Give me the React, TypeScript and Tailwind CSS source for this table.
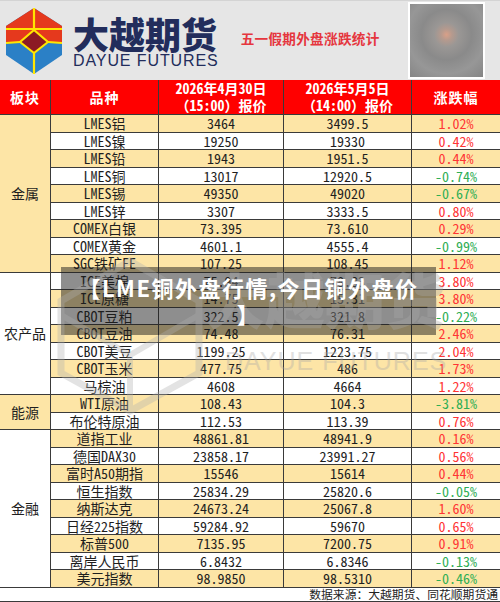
import React from "react";

type Row = { name: string; a: string; b: string; p: string };
type Group = { sector: string; rows: Row[] };

const groups: Group[] = [
  {
    sector: "金属",
    rows: [
      { name: "LMES铝", a: "3464", b: "3499.5", p: "1.02%" },
      { name: "LMES镍", a: "19250", b: "19330", p: "0.42%" },
      { name: "LMES铅", a: "1943", b: "1951.5", p: "0.44%" },
      { name: "LMES铜", a: "13017", b: "12920.5", p: "-0.74%" },
      { name: "LMES锡", a: "49350", b: "49020", p: "-0.67%" },
      { name: "LMES锌", a: "3307", b: "3333.5", p: "0.80%" },
      { name: "COMEX白银", a: "73.395", b: "73.610", p: "0.29%" },
      { name: "COMEX黄金", a: "4601.1", b: "4555.4", p: "-0.99%" },
      { name: "SGC铁矿FE", a: "107.25", b: "108.45", p: "1.12%" },
    ],
  },
  {
    sector: "农产品",
    rows: [
      { name: "ICE美棉", a: "75.94", b: "78.83", p: "3.80%" },
      { name: "ICE原糖", a: "14.75", b: "15.31", p: "3.80%" },
      { name: "CBOT豆粕", a: "322.5", b: "321.8", p: "-0.22%" },
      { name: "CBOT豆油", a: "74.48", b: "76.31", p: "2.46%" },
      { name: "CBOT美豆", a: "1199.25", b: "1223.75", p: "2.04%" },
      { name: "CBOT玉米", a: "477.75", b: "486", p: "1.73%" },
      { name: "马棕油", a: "4608", b: "4664", p: "1.22%" },
    ],
  },
  {
    sector: "能源",
    rows: [
      { name: "WTI原油", a: "108.43", b: "104.3", p: "-3.81%" },
      { name: "布伦特原油", a: "112.53", b: "113.39", p: "0.76%" },
    ],
  },
  {
    sector: "金融",
    rows: [
      { name: "道指工业", a: "48861.81", b: "48941.9", p: "0.16%" },
      { name: "德国DAX30", a: "23858.17", b: "23991.27", p: "0.56%" },
      { name: "富时A50期指", a: "15546", b: "15614", p: "0.44%" },
      { name: "恒生指数", a: "25834.29", b: "25820.6", p: "-0.05%" },
      { name: "纳斯达克", a: "24673.24", b: "25067.8", p: "1.60%" },
      { name: "日经225指数", a: "59284.92", b: "59670", p: "0.65%" },
      { name: "标普500", a: "7135.95", b: "7200.75", p: "0.91%" },
      { name: "离岸人民币", a: "6.8432", b: "6.8346", p: "-0.13%" },
      { name: "美元指数", a: "98.9850", b: "98.5310", p: "-0.46%" },
    ],
  },
];

function Logo() {
  return (
    <svg width="56" height="66" viewBox="0 0 56 66">
      <polygon points="28,0 56,18 56,47 28,66 0,47 0,18" fill="#2b80c6" />
      <polygon points="0,18 28,0 56,18 56,35 42,34 28,45 14,34 0,35" fill="#e5391d" />
      <polygon points="28,22 42,34 28,45 14,34" fill="#8c1b24" />
      <g stroke="#ffe600" strokeWidth="2.2" fill="none" strokeLinejoin="round">
        <line x1="0" y1="21" x2="56" y2="21" />
        <line x1="28" y1="0" x2="28" y2="22" />
        <polygon points="28,22 42,34 28,45 14,34" />
        <line x1="0" y1="35" x2="14" y2="34" />
        <line x1="42" y1="34" x2="56" y2="35" />
        <line x1="28" y1="45" x2="28" y2="66" />
      </g>
    </svg>
  );
}

const YELLOW = "bg-[#fde5a6]";

export default function App() {
  let idx = 0;
  return (
    <div className="relative w-[500px] h-[602px] overflow-hidden bg-white font-['Noto_Sans_Mono_CJK_SC','Noto_Sans_CJK_SC',sans-serif] text-[#1e1e1e]">
      {/* Top banner */}
      <div className="flex items-center h-[80px] bg-[#e6e6e6] border-t border-[#d4d4d4]">
        <div className="ml-[6px] mt-[1px]">
          <Logo />
        </div>
        <div className="flex flex-col ml-[11px] mt-[2px]">
          <div className="font-['Noto_Sans_CJK_SC',sans-serif] font-black text-[36px] leading-[40px] text-[#222d5c]">
            大越期货
          </div>
          <div className="font-['Liberation_Sans',sans-serif] text-[16px] leading-[18px] tracking-[0.9px] text-[#222d5c] mt-[-1px]">
            DAYUE FUTURES
          </div>
        </div>
        <div className="ml-[22px] mt-[-5px] font-['Noto_Sans_CJK_SC',sans-serif] font-bold text-[13.6px] tracking-[0.3px] text-[#e5363e]">
          五一假期外盘涨跌统计
        </div>
        <div className="ml-auto mr-[15px] w-[77px] h-[77px] bg-white p-[2px]">
          <div className="w-full h-full bg-[radial-gradient(circle_at_50%_42%,#d9a088_0%,#b59a8e_10%,#9a9795_22%,#8a8a8a_45%,#979797_70%,#858585_100%)]" />
        </div>
      </div>

      {/* Table header */}
      <div className="flex h-[35px] bg-[#ff0000] text-white font-bold text-[14px] leading-[17px] border-b border-[#3a3a3a] text-center">
        <div className="w-[51px] border-r border-[#3a3a3a] flex items-center justify-center tracking-[1px]">板块</div>
        <div className="w-[108px] border-r border-[#3a3a3a] flex items-center justify-center tracking-[1px]">品种</div>
        <div className="w-[125px] border-r border-[#3a3a3a] flex flex-col items-center justify-center">
          <span>2026年4月30日</span>
          <span>（15:00）报价</span>
        </div>
        <div className="w-[128px] border-r border-[#3a3a3a] flex flex-col items-center justify-center">
          <span>2026年5月5日</span>
          <span>（14:00）报价</span>
        </div>
        <div className="flex-1 flex items-center justify-center tracking-[1px]">涨跌幅</div>
      </div>

      {/* Body */}
      <div className="flex flex-col text-[14px] leading-[16px]">
        {groups.map((g, gi) => (
          <div key={g.sector} className="flex">
            <div
              className={
                "w-[51px] shrink-0 border-r border-b border-[#3a3a3a] flex items-center justify-center " +
                (gi % 2 === 0 ? YELLOW : "bg-white")
              }
            >
              {g.sector}
            </div>
            <div className="flex flex-col flex-1">
              {g.rows.map((r) => {
                const y = idx % 2 === 0;
                idx++;
                const neg = r.p.startsWith("-");
                return (
                  <div
                    key={r.name}
                    className={"flex h-[17.5px] border-b border-[#3a3a3a] " + (y ? YELLOW : "bg-white")}
                  >
                    <div className="w-[108px] border-r border-[#3a3a3a] flex items-center justify-center">{r.name}</div>
                    <div className="w-[125px] border-r border-[#3a3a3a] flex items-center justify-center">{r.a}</div>
                    <div className="w-[128px] border-r border-[#3a3a3a] flex items-center justify-center">{r.b}</div>
                    <div
                      className={
                        "flex-1 flex items-center justify-center " + (neg ? "text-[#2fae55]" : "text-[#ff3535]")
                      }
                    >
                      {r.p}
                    </div>
                  </div>
                );
              })}
            </div>
          </div>
        ))}
      </div>

      {/* Footer */}
      <div className="flex items-center justify-end h-[14.5px] border-b border-[#3a3a3a] pr-[2px] text-[11.8px] leading-[12px] text-[#222]">
        数据来源：大越期货、同花顺期货通
      </div>

      {/* Title overlay box */}
      <div className="absolute left-[61px] top-[267px] w-[375px] h-[68px] bg-[rgba(30,30,30,0.5)]" />

      {/* Watermark */}
      <div className="absolute left-[55px] top-[255px] w-[400px] h-[160px] opacity-35 pointer-events-none">
        <svg className="absolute left-0 top-0" width="150" height="160" viewBox="0 0 150 160">
          <polygon points="75,6 144,46 144,118 75,156 6,118 6,46" fill="none" stroke="#b0b0b0" strokeWidth="7" />
          <polyline points="6,60 75,100 144,60" fill="none" stroke="#b0b0b0" strokeWidth="6" />
          <line x1="75" y1="100" x2="75" y2="156" stroke="#b0b0b0" strokeWidth="6" />
        </svg>
        <div className="absolute left-[150px] top-[8px] font-['Noto_Sans_CJK_SC',sans-serif] font-black text-[60px] leading-[70px] text-[#a8a8a8] whitespace-nowrap">
          大越期货
        </div>
        <div className="absolute left-[170px] top-[92px] font-['Liberation_Sans',sans-serif] text-[25px] leading-[28px] tracking-[1px] text-[#a8a8a8] whitespace-nowrap">
          DAYUE FUTURES
        </div>
      </div>

      {/* Title text */}
      <div className="absolute left-[61px] top-[267px] w-[375px] h-[68px] px-[14px] pt-[7px] text-center text-white font-bold text-[22px] leading-[26px] tracking-[1.5px] [line-break:anywhere] font-['Noto_Sans_CJK_SC',sans-serif]">
        【LME铜外盘行情,今日铜外盘价】
      </div>
    </div>
  );
}
